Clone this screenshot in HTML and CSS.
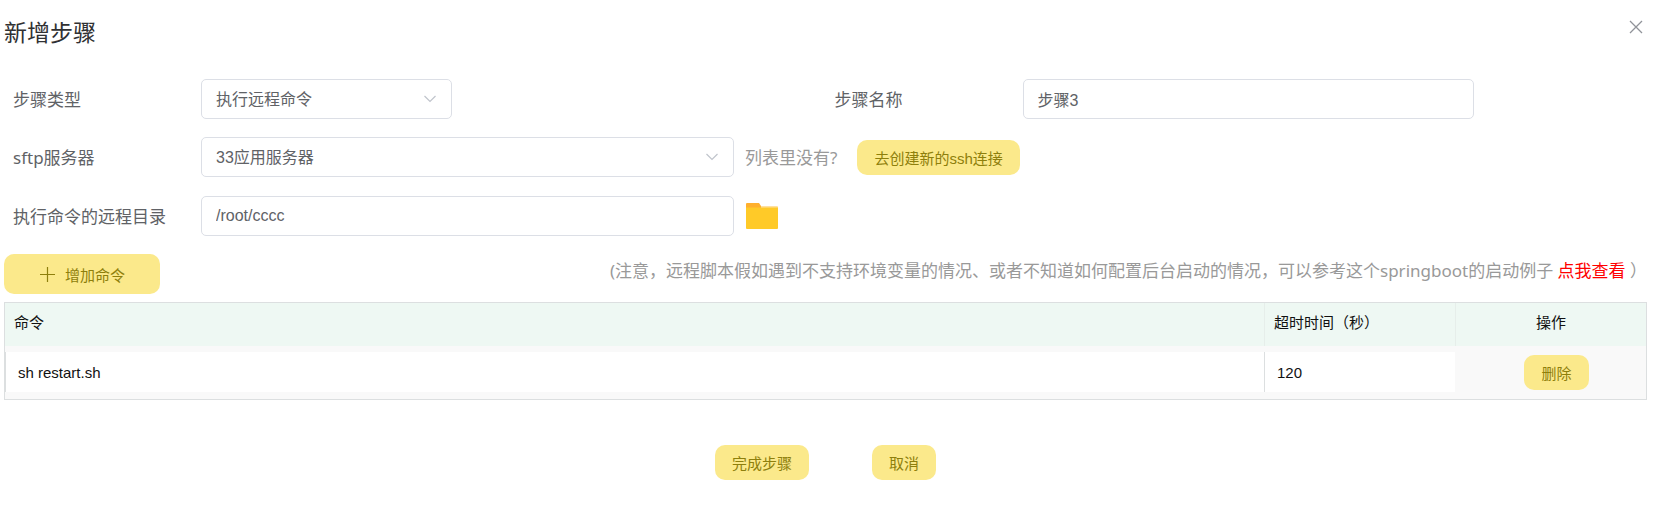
FILE: index.html
```html
<!DOCTYPE html>
<html lang="zh-CN">
<head>
<meta charset="utf-8">
<meta name="viewport" content="width=device-width, initial-scale=1">
<title>新增步骤</title>
<link rel="stylesheet" href="styles.css">
</head>
<body>
<main class="dialog">
  <header class="dialog-header">
    <h1 class="dialog-title">新增步骤</h1>
    <button class="close" type="button" aria-label="关闭">
      <svg width="14" height="14" viewBox="0 0 14 14" fill="none" stroke="#909399" stroke-width="1.3"><path d="M1 1l12 12M13 1L1 13"/></svg>
    </button>
  </header>

  <form class="form">
    <div class="row row-split">
      <div class="field">
        <label class="label" for="type">步骤类型</label>
        <div class="select select-type">
          <select class="control" id="type"><option>执行远程命令</option></select>
          <svg class="chevron" width="12" height="8" viewBox="0 0 12 8" fill="none" stroke="#c0c4cc" stroke-width="1.2"><path d="M.5 1L6 6.5 11.5 1"/></svg>
        </div>
      </div>
      <div class="field">
        <label class="label" for="name">步骤名称</label>
        <input class="control input-name" id="name" type="text" value="步骤3">
      </div>
    </div>
    <div class="row field">
      <label class="label" for="server">sftp服务器</label>
      <div class="select select-server">
        <select class="control" id="server"><option>33应用服务器</option></select>
        <svg class="chevron" width="12" height="8" viewBox="0 0 12 8" fill="none" stroke="#c0c4cc" stroke-width="1.2"><path d="M.5 1L6 6.5 11.5 1"/></svg>
      </div>
      <span class="hint">列表里没有?</span>
      <button class="btn btn-create" type="button">去创建新的ssh连接</button>
    </div>
    <div class="row field row-dir">
      <label class="label" for="dir">执行命令的远程目录</label>
      <input class="control input-dir" id="dir" type="text" value="/root/cccc">
      <button class="folder" type="button" aria-label="选择目录">
        <svg width="32" height="26" viewBox="0 0 32 26"><path fill="#ffe0a0" d="M12 3h19q1 0 1 1v3H12z"/><path fill="#ffb02e" d="M1 0h12l2 3v3H0V1q0-1 1-1z"/><path fill="#ffca28" d="M0 4.500h32V25q0 1-1 1H1q-1 0-1-1z"/></svg>
      </button>
    </div>
  </form>

  <div class="toolbar">
    <button class="btn btn-add" type="button">
      <svg width="15" height="15" viewBox="0 0 15 15" fill="none" stroke="#8e7f0c" stroke-width="1.2"><path d="M7.500 0v15M0 7.500h15"/></svg>
      <span>增加命令</span>
    </button>
    <p class="note">(注意，远程脚本假如遇到不支持环境变量的情况、或者不知道如何配置后台启动的情况，可以参考这个springboot的启动例子 <a class="note-link" href="#example">点我查看</a> ）</p>
  </div>

  <table class="commands">
    <colgroup><col><col class="col-small"><col class="col-small"></colgroup>
    <thead>
      <tr><th scope="col">命令</th><th scope="col">超时时间（秒）</th><th class="center" scope="col">操作</th></tr>
    </thead>
    <tbody>
      <tr>
        <td><input class="cell-input" type="text" value="sh restart.sh" aria-label="命令"></td>
        <td><input class="cell-input" type="text" value="120" aria-label="超时时间（秒）"></td>
        <td class="center cell-action"><button class="btn" type="button">删除</button></td>
      </tr>
    </tbody>
  </table>

  <footer class="actions">
    <button class="btn" type="submit">完成步骤</button>
    <button class="btn" type="button">取消</button>
  </footer>
</main>
</body>
</html>
```
FILE: styles.css
```css
* {
  box-sizing: border-box;
}

body {
  margin: 0;
  background: #fff;
  color: #606266;
  font: 17px/24px "Noto Sans", "Noto Sans CJK SC", sans-serif;
}

button,
input,
select {
  margin: 0;
  font-family: "Liberation Sans", "Noto Sans CJK SC", sans-serif;
}

.dialog {
  padding: 16px 17px 32px 4px;
}

.dialog-header {
  display: flex;
  justify-content: space-between;
  align-items: flex-start;
}

.dialog-title {
  margin: 0;
  color: #303133;
  font-size: 23px;
  font-weight: 400;
  line-height: 32px;
}

.close,
.folder {
  display: flex;
  padding: 0;
  border: 0;
  background: none;
  cursor: pointer;
}

.close {
  padding: 4px;
}

.form {
  display: grid;
  gap: 18px;
  margin-top: 31px;
}

.row-split {
  display: grid;
  grid-template-columns: 1fr 1fr;
}

.row-dir {
  min-height: 42px;
}

.field {
  display: flex;
  align-items: center;
}

.label {
  flex: none;
  width: 197px;
  padding: 2px 0 0 9px;
}

.control {
  width: 100%;
  height: 40px;
  padding: 0 14px;
  border: 1px solid #dcdfe6;
  border-radius: 5px;
  background: #fff;
  color: #606266;
  font-size: 16px;
  appearance: none;
}

.select {
  position: relative;
}

.chevron {
  position: absolute;
  top: 16px;
  right: 16px;
  pointer-events: none;
}

.select-type {
  width: 251px;
}

.input-name {
  width: 55%;
}

.select-server,
.input-dir {
  flex: none;
  width: 533px;
}

.hint {
  margin-left: 11px;
  padding-top: 2px;
  color: #999;
}

.btn {
  height: 35px;
  padding: 0 17px;
  border: 0;
  border-radius: 10px;
  background: #fbe98b;
  color: #8e7f0c;
  font-size: 15px;
  cursor: pointer;
}

.btn-create {
  margin-left: 20px;
}

.folder {
  margin-left: 12px;
}

.toolbar {
  display: flex;
  justify-content: space-between;
  align-items: center;
  margin-top: 17px;
}

.btn-add {
  display: flex;
  flex: none;
  align-items: center;
  gap: 10px;
  height: 40px;
  padding: 0 35px 0 36px;
}

.note {
  margin: 0;
  padding-bottom: 6px;
  color: #999;
}

.note-link {
  color: #f00;
  text-decoration: none;
}

.commands {
  width: 100%;
  margin-top: 8px;
  border: 1px solid #dcdfe0;
  border-spacing: 0;
  table-layout: fixed;
  color: #111;
  font-size: 15px;
}

.col-small {
  width: 191px;
}

.commands th {
  height: 43px;
  padding: 0 9px 6px;
  background: #eef8f3;
  font-weight: 400;
  text-align: left;
}

.commands th + th {
  border-left: 1px solid #e6eeea;
}

.commands td {
  padding: 6px 0 7px;
  background: #f9f9f9;
}

.commands .center {
  text-align: center;
}

.commands .cell-action {
  padding-left: 12px;
}

.cell-input {
  display: block;
  width: 100%;
  height: 40px;
  padding: 0 12px;
  border: 0;
  border-left: 1px solid #dcdfe0;
  background: #fff;
  color: #111;
  font-size: 15px;
}

.actions {
  display: flex;
  justify-content: center;
  gap: 63px;
  margin-top: 45px;
}
```
